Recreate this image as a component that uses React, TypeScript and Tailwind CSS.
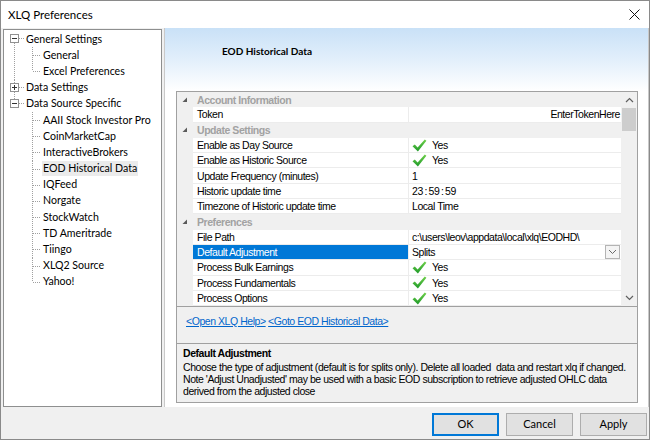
import React from 'react';

type TreeItem = {
  label: string;
  level: 0 | 1;
  box?: 'minus' | 'plus';
  up?: boolean;
  down?: boolean;
  rail?: boolean;
  last?: boolean;
  selected?: boolean;
};

const treeItems: TreeItem[] = [
  { label: 'General Settings', level: 0, box: 'minus', down: true },
  { label: 'General', level: 1, rail: true },
  { label: 'Excel Preferences', level: 1, rail: true, last: true },
  { label: 'Data Settings', level: 0, box: 'plus', up: true, down: true },
  { label: 'Data Source Specific', level: 0, box: 'minus', up: true },
  { label: 'AAII Stock Investor Pro', level: 1 },
  { label: 'CoinMarketCap', level: 1 },
  { label: 'InteractiveBrokers', level: 1 },
  { label: 'EOD Historical Data', level: 1, selected: true },
  { label: 'IQFeed', level: 1 },
  { label: 'Norgate', level: 1 },
  { label: 'StockWatch', level: 1 },
  { label: 'TD Ameritrade', level: 1 },
  { label: 'Tiingo', level: 1 },
  { label: 'XLQ2 Source', level: 1 },
  { label: 'Yahoo!', level: 1, last: true },
];

const dot = { stroke: '#a0a0a0', strokeWidth: 1, strokeDasharray: '1 1' };

function TreeGuide({ item }: { item: TreeItem }) {
  if (item.level === 0) {
    return (
      <svg width="21" className="h-full shrink-0">
        {item.up && <line x1="10.5" y1="0" x2="10.5" y2="3" {...dot} />}
        {item.down && <line x1="10.5" y1="12" x2="10.5" y2="17" {...dot} />}
        <line x1="15" y1="7.5" x2="21" y2="7.5" {...dot} />
        <rect x="6.5" y="3.5" width="8" height="8" fill="#fff" stroke="#919191" />
        <line x1="8" y1="7.5" x2="13" y2="7.5" stroke="#333" />
        {item.box === 'plus' && <line x1="10.5" y1="5" x2="10.5" y2="10" stroke="#333" />}
      </svg>
    );
  }
  return (
    <svg width="38" className="h-full shrink-0">
      {item.rail && <line x1="10.5" y1="0" x2="10.5" y2="17" {...dot} />}
      <line x1="28.5" y1="0" x2="28.5" y2={item.last ? 8 : 17} {...dot} />
      <line x1="29" y1="8.5" x2="37" y2="8.5" {...dot} />
    </svg>
  );
}

function Check() {
  return (
    <svg width="15" height="13" viewBox="0 0 15 13" className="shrink-0">
      <defs>
        <linearGradient id="chk" x1="0" y1="0" x2="0" y2="1">
          <stop offset="0" stopColor="#6fd04a" />
          <stop offset="1" stopColor="#1f9a2a" />
        </linearGradient>
      </defs>
      <path d="M0.5 7.2 L2.8 5.6 L5.6 8.6 L12.8 0.6 L14.4 1.8 L5.9 12.4 Z" fill="url(#chk)" />
    </svg>
  );
}

type Row =
  | { cat: string }
  | { label: string; value?: string; check?: boolean; right?: boolean; selected?: boolean; drop?: boolean };

const rows: Row[] = [
  { cat: 'Account Information' },
  { label: 'Token', value: 'EnterTokenHere', right: true },
  { cat: 'Update Settings' },
  { label: 'Enable as Day Source', check: true },
  { label: 'Enable as Historic Source', check: true },
  { label: 'Update Frequency (minutes)', value: '1' },
  { label: 'Historic update time', value: '23\u2009:\u200959\u2009:\u200959' },
  { label: 'Timezone of Historic update time', value: 'Local Time' },
  { cat: 'Preferences' },
  { label: 'File Path', value: 'c:\\users\\leov\\appdata\\local\\xlq\\EODHD\\' },
  { label: 'Default Adjustment', value: 'Splits', selected: true, drop: true },
  { label: 'Process Bulk Earnings', check: true },
  { label: 'Process Fundamentals', check: true },
  { label: 'Process Options', check: true },
];

function GridRow({ row }: { row: Row }) {
  if ('cat' in row) {
    return (
      <div className="flex h-[15.3px] shrink-0 items-center overflow-hidden bg-[#f0f0f0]">
        <div className="flex w-[16px] justify-center">
          <svg width="6" height="6" viewBox="0 0 6 6">
            <path d="M5 0.5 L5 5 L0.5 5 Z" fill="#5a5a5a" />
          </svg>
        </div>
        <span className="pl-[4px] font-bold text-[#a2a2a2]">{row.cat}</span>
      </div>
    );
  }
  return (
    <div className="flex h-[15.3px] shrink-0 overflow-hidden">
      <div className="w-[16px] bg-[#f0f0f0]" />
      <div
        className={`flex w-[216px] items-center border-r border-b border-[#ececec] pl-[4px] ${
          row.selected ? 'bg-[#0078d7] text-white' : 'text-black'
        }`}
      >
        {row.label}
      </div>
      <div className="flex w-[212px] items-center border-b border-[#ececec] pl-[3px] text-black">
        {row.check ? (
          <>
            <Check />
            <span className="pl-[5px]">Yes</span>
          </>
        ) : (
          <span className={row.right ? 'ml-auto pr-[1px]' : ''}>{row.value}</span>
        )}
        {row.drop && (
          <div className="ml-auto mr-[1px] flex h-[14px] w-[15px] items-center justify-center border border-[#b4b4b4] bg-[#f4f4f4]">
            <svg width="9" height="6" viewBox="0 0 9 6">
              <path d="M1 1 L4.5 4.5 L8 1" fill="none" stroke="#6a6a6a" strokeWidth="1" />
            </svg>
          </div>
        )}
      </div>
    </div>
  );
}

export default function App() {
  return (
    <div className="flex h-[440px] w-[650px] flex-col overflow-hidden border border-[#8a8a8a] bg-[#f0f0f0] font-['Lato',sans-serif] text-[11px] text-black">
      {/* title bar */}
      <div className="flex h-[27px] shrink-0 items-center bg-white pl-[7px] pr-[8px]">
        <span className="text-[11.5px]">XLQ Preferences</span>
        <svg width="11" height="11" viewBox="0 0 11 11" className="ml-auto mr-[1px]">
          <path d="M0.5 0.5 L10.5 10.5 M10.5 0.5 L0.5 10.5" stroke="#111" strokeWidth="1" />
        </svg>
      </div>

      <div className="flex h-[379px] shrink-0 pl-[2px]">
        {/* tree */}
        <div className="mt-[1px] h-[378px] w-[159px] shrink-0 border border-[#8e8f8f] bg-white pt-[1px] text-[10.6px]">
          {treeItems.map((it) => (
            <div key={it.label} className="flex h-[16.2px] items-stretch">
              <TreeGuide item={it} />
              <div className="flex items-center">
                <span
                  className={`whitespace-nowrap px-[1px] leading-[15px] ${it.selected ? 'bg-[#ebebeb]' : ''}`}
                >
                  {it.label}
                </span>
              </div>
            </div>
          ))}
        </div>

        {/* right panel */}
        <div className="ml-[2px] flex flex-1 flex-col border-l border-r border-[#c9c9c9] bg-white">
          <div className="flex h-[63px] shrink-0 bg-linear-to-b from-[#c9e1f7] via-[#e2effb] to-white pl-[57px] pt-[16px]">
            <span className="text-[10px] font-bold">EOD Historical Data</span>
          </div>

          <div className="ml-[11px] flex h-[312px] w-[462px] flex-col border border-[#a0a0a0] bg-[#f0f0f0] font-['Liberation_Sans',Arial,sans-serif] text-[10.5px] leading-[12px] tracking-[-0.45px]">
            <div className="flex h-[214px] shrink-0 overflow-hidden bg-white">
              <div className="flex w-[444px] flex-col">
                {rows.map((r, i) => (
                  <GridRow key={i} row={r} />
                ))}
              </div>
              {/* scrollbar */}
              <div className="flex w-[16px] flex-col bg-[#f0f0f0]">
                <div className="flex h-[16px] items-center justify-center">
                  <svg width="9" height="6" viewBox="0 0 9 6">
                    <path d="M1 5 L4.5 1.5 L8 5" fill="none" stroke="#606060" strokeWidth="1.2" />
                  </svg>
                </div>
                <div className="mx-[1px] h-[23px] bg-[#cdcdcd]" />
                <div className="flex-1" />
                <div className="flex h-[16px] items-center justify-center">
                  <svg width="9" height="6" viewBox="0 0 9 6">
                    <path d="M1 1 L4.5 4.5 L8 1" fill="none" stroke="#606060" strokeWidth="1.2" />
                  </svg>
                </div>
              </div>
            </div>

            <div className="h-[37px] shrink-0 border-t border-[#a0a0a0] pl-[9px] pt-[8px]">
              <a className="cursor-pointer text-[#0066cc] underline">&lt;Open XLQ Help&gt;</a>{' '}
              <a className="cursor-pointer text-[#0066cc] underline">&lt;Goto EOD Historical Data&gt;</a>
            </div>

            <div className="flex-1 border-t border-[#a0a0a0] pl-[6px] pt-[3px]">
              <div className="mb-[2px] font-bold">Default Adjustment</div>
              <div className="whitespace-pre">
                {'Choose the type of adjustment (default is for splits only). Delete all loaded  data and restart xlq if changed.'}
              </div>
              <div className="whitespace-pre">
                {"Note 'Adjust Unadjusted' may be used with a basic EOD subscription to retrieve adjusted OHLC data"}
              </div>
              <div className="whitespace-pre">derived from the adjusted close</div>
            </div>
          </div>
        </div>
      </div>

      {/* buttons */}
      <div className="flex flex-1 items-start justify-end gap-[7px] pr-[2px] pt-[6px]">
        <button className="h-[23px] w-[67px] border border-[#0078d7] bg-[#e1e1e1] shadow-[inset_0_0_0_1px_#0078d7]">
          OK
        </button>
        <button className="h-[23px] w-[67px] border border-[#adadad] bg-[#e1e1e1]">Cancel</button>
        <button className="h-[23px] w-[67px] border border-[#adadad] bg-[#e1e1e1]">Apply</button>
      </div>
    </div>
  );
}
